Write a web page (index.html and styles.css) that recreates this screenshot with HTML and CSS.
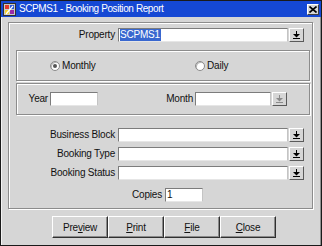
FILE: index.html
```html
<!DOCTYPE html>
<html>
<head>
<meta charset="utf-8">
<link rel="stylesheet" href="styles.css">
</head>
<body>
<div class="window">
  <div class="titlebar">
    <svg class="appicon" viewBox="0 0 13 13" width="13" height="13">
      <rect x="0.5" y="0.5" width="12" height="12" fill="#c8c8c8" stroke="#303030"/>
      <rect x="2" y="2" width="4" height="4" fill="#e23a2a"/>
      <rect x="7" y="2" width="4" height="4" fill="#2a55d8"/>
      <rect x="2" y="7" width="4" height="4" fill="#f0d030"/>
      <rect x="7" y="7" width="4" height="4" fill="#9a2aa8"/>
      <path d="M3 11 L10 3" stroke="#fff" stroke-width="1.2"/>
    </svg>
    <span class="title">SCPMS1 - Booking Position Report</span>
    <span class="close">
      <svg viewBox="0 0 8 7" width="8" height="7"><path d="M0.5 0.5 L7.5 6.5 M7.5 0.5 L0.5 6.5" stroke="#000" stroke-width="1.6"/></svg>
    </span>
  </div>
  <div class="client">
    <div class="panel">
      <div class="row row-property">
        <span class="lbl">Property</span>
        <span class="input wide"><span class="sel">SCPMS1</span></span>
        <span class="lov"><svg viewBox="0 0 7 8" width="7" height="8"><rect x="3" y="0" width="1" height="3" fill="#000"/><path d="M0 3 H7 L3.5 6.5 Z" fill="#000"/><rect x="0" y="7" width="7" height="1" fill="#000"/></svg></span>
      </div>
      <div class="group radios">
        <span class="radio-item first"><span class="radio checked"></span>Monthly</span>
        <span class="radio-item"><span class="radio"></span>Daily</span>
      </div>
      <div class="group yearmonth">
        <span class="lbl lbl-year">Year</span>
        <span class="input year"></span>
        <span class="lbl lbl-month">Month</span>
        <span class="input month"></span>
        <span class="lov disabled"><svg viewBox="0 0 7 8" width="7" height="8"><rect x="3" y="0" width="1" height="3" fill="#8a8a8a"/><path d="M0 3 H7 L3.5 6.5 Z" fill="#8a8a8a"/><rect x="0" y="7" width="7" height="1" fill="#8a8a8a"/></svg></span>
      </div>
      <div class="fields">
        <div class="row">
          <span class="lbl">Business Block</span>
          <span class="input wide"></span>
          <span class="lov"><svg viewBox="0 0 7 8" width="7" height="8"><rect x="3" y="0" width="1" height="3" fill="#000"/><path d="M0 3 H7 L3.5 6.5 Z" fill="#000"/><rect x="0" y="7" width="7" height="1" fill="#000"/></svg></span>
        </div>
        <div class="row">
          <span class="lbl">Booking Type</span>
          <span class="input wide"></span>
          <span class="lov"><svg viewBox="0 0 7 8" width="7" height="8"><rect x="3" y="0" width="1" height="3" fill="#000"/><path d="M0 3 H7 L3.5 6.5 Z" fill="#000"/><rect x="0" y="7" width="7" height="1" fill="#000"/></svg></span>
        </div>
        <div class="row">
          <span class="lbl">Booking Status</span>
          <span class="input wide"></span>
          <span class="lov"><svg viewBox="0 0 7 8" width="7" height="8"><rect x="3" y="0" width="1" height="3" fill="#000"/><path d="M0 3 H7 L3.5 6.5 Z" fill="#000"/><rect x="0" y="7" width="7" height="1" fill="#000"/></svg></span>
        </div>
      </div>
      <div class="row row-copies">
        <span class="lbl lbl-copies">Copies</span>
        <span class="input copies">1</span>
      </div>
    </div>
    <div class="buttons">
      <span class="btn">Pre<u>v</u>iew</span>
      <span class="btn"><u>P</u>rint</span>
      <span class="btn"><u>F</u>ile</span>
      <span class="btn"><u>C</u>lose</span>
    </div>
  </div>
</div>
</body>
</html>
```
FILE: styles.css
```css
* { box-sizing: border-box; }
html, body { margin: 0; padding: 0; }
body {
  width: 322px;
  height: 246px;
  overflow: hidden;
  background: #d6d6d6;
  font-family: "Liberation Sans", Arial, sans-serif;
  font-size: 10px;
  letter-spacing: -0.2px;
  color: #111;
}
.window {
  width: 322px;
  height: 246px;
  border: 1px solid #1a1a1a;
  background: #d6d6d6;
  display: flex;
  flex-direction: column;
}
.titlebar {
  height: 16px;
  flex: none;
  background: #1548d4;
  display: flex;
  align-items: center;
  padding: 0 2px;
  color: #fff;
}
.appicon { flex: none; display: block; }
.title {
  margin-left: 3px;
  flex: 1;
  font-size: 10px;
  letter-spacing: -0.4px;
  white-space: nowrap;
  line-height: 16px;
}
.close {
  width: 12px;
  height: 11px;
  background: #d6d6d6;
  border: 1px solid;
  border-color: #fff #404040 #404040 #fff;
  display: flex;
  align-items: center;
  justify-content: center;
}
.close svg { display: block; }
.client {
  flex: 1;
  padding: 5px 7px 0 6px;
  border-left: 1px solid #f4f4f4;
  border-right: 1px solid #909090;
}
.panel {
  border: 1px solid #8c8c8c;
  box-shadow: inset 1px 1px 0 #fff, 1px 1px 0 #fff;
  padding: 5px 0 6px 0;
}
.row {
  display: flex;
  align-items: center;
  height: 14px;
}
.lbl {
  width: 106px;
  margin-right: 3px;
  text-align: right;
  white-space: nowrap;
  line-height: 14px;
}
.input {
  display: block;
  height: 14px;
  background: #fff;
  border: 1px solid;
  border-color: #7c7c7c #c4c4c4 #e6e6e6 #7c7c7c;
  line-height: 12px;
  padding-left: 1px;
  white-space: nowrap;
}
.input.wide { width: 170px; }
.sel {
  display: inline-block;
  background: #3867cf;
  color: #fff;
  height: 12px;
  line-height: 12px;
  padding-right: 1px;
}
.lov {
  width: 15px;
  height: 14px;
  margin-left: 1px;
  background: #d6d6d6;
  border: 1px solid;
  border-color: #fff #5a5a5a #5a5a5a #fff;
  display: flex;
  align-items: center;
  justify-content: center;
}
.lov svg { display: block; }
.group {
  margin-left: 7px;
  width: 294px;
  border: 1px solid #8c8c8c;
  box-shadow: inset 1px 1px 0 #fff, 1px 1px 0 #fff;
  display: flex;
  align-items: center;
}
.radios {
  margin-top: 8px;
  height: 31px;
  padding-left: 33px;
}
.radio-item {
  display: flex;
  align-items: center;
}
.radio-item.first { width: 145px; }
.radio {
  width: 10px;
  height: 10px;
  border-radius: 50%;
  background: #fff;
  border: 1px solid #8a8a8a;
  margin-right: 2px;
  position: relative;
  box-shadow: inset 1px 1px 0 #b8b8b8;
}
.radio.checked::after {
  content: "";
  position: absolute;
  left: 2px;
  top: 2px;
  width: 4px;
  height: 4px;
  border-radius: 50%;
  background: #555;
}
.yearmonth {
  margin-top: 2px;
  height: 32px;
}
.lbl-year { width: 31px; margin-right: 2px; }
.input.year { width: 48px; }
.lbl-month { width: 95px; margin-right: 2px; }
.input.month { width: 76px; }
.fields {
  margin-top: 13px;
  display: flex;
  flex-direction: column;
  gap: 5px;
}
.row-copies { margin-top: 8px; }
.lbl-copies { width: 153px; }
.input.copies { width: 38px; }
.buttons {
  display: flex;
  margin-top: 7px;
  padding-left: 44px;
}
.btn {
  width: 56px;
  height: 22px;
  background: #d6d6d6;
  border: 1px solid;
  border-color: #fff #303030 #303030 #fff;
  box-shadow: inset -1px -1px 0 #8a8a8a;
  display: flex;
  align-items: center;
  justify-content: center;
}
```
